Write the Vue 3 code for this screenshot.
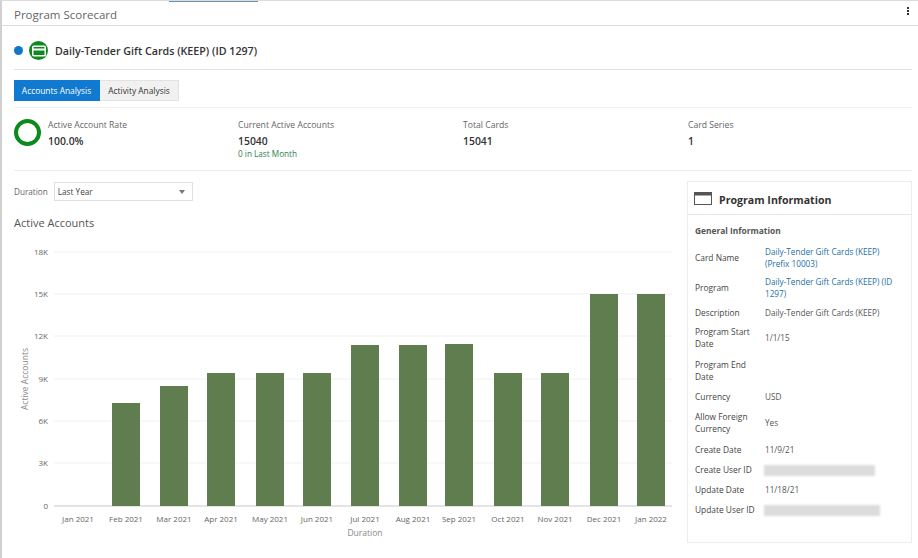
<template>
  <div class="page">
    <div class="top-tab"></div>
    <header class="head">
      <span class="head-title">Program Scorecard</span>
      <span class="kebab"><i></i><i></i><i></i></span>
    </header>

    <div class="content">
      <div class="program-row">
        <span class="status-dot"></span>
        <span class="card-badge">
          <svg width="14" height="12" viewBox="0 0 14 12">
            <rect x="0.75" y="1.25" width="12.5" height="9.5" rx="1" fill="none" stroke="#fff" stroke-width="1.5" />
            <rect x="1" y="3.5" width="12" height="2" fill="#fff" />
          </svg>
        </span>
        <span class="program-name">Daily-Tender Gift Cards (KEEP) (ID 1297)</span>
      </div>

      <div class="tabs-row">
        <button class="tab active">Accounts Analysis</button>
        <button class="tab">Activity Analysis</button>
      </div>

      <div class="metrics">
        <div class="metric first">
          <span class="ring"></span>
          <div>
            <div class="metric-label">Active Account Rate</div>
            <div class="metric-value">100.0%</div>
          </div>
        </div>
        <div class="metric">
          <div>
            <div class="metric-label">Current Active Accounts</div>
            <div class="metric-value">15040</div>
            <div class="metric-note">0 in Last Month</div>
          </div>
        </div>
        <div class="metric">
          <div>
            <div class="metric-label">Total Cards</div>
            <div class="metric-value">15041</div>
          </div>
        </div>
        <div class="metric">
          <div>
            <div class="metric-label">Card Series</div>
            <div class="metric-value">1</div>
          </div>
        </div>
      </div>

      <div class="main">
        <section class="chart-col">
          <div class="duration">
            <label>Duration</label>
            <div class="select">
              <span>Last Year</span>
              <span class="caret"></span>
            </div>
          </div>
          <h2 class="chart-title">Active Accounts</h2>
          <svg class="chart" width="672" height="320" viewBox="0 0 672 320">
            <g v-for="t in ticks" :key="t.label">
              <line x1="54" x2="672" :y1="t.y" :y2="t.y" :stroke="t.label === '0' ? '#c9c9c9' : '#f0f0f0'" />
              <text class="axis-text" x="48" :y="t.y + 3" text-anchor="end">{{ t.label }}</text>
            </g>
            <rect
              v-for="b in bars"
              :key="b.label"
              :x="b.x"
              :y="baseY - b.h"
              width="28"
              :height="b.h"
              fill="#5f7d4f"
            />
            <text
              v-for="b in bars"
              :key="b.label + 't'"
              class="axis-text"
              :x="b.x + 14"
              :y="baseY + 16"
              text-anchor="middle"
            >{{ b.label }}</text>
            <text class="axis-title" x="365" y="315" text-anchor="middle">Duration</text>
            <text class="axis-title" transform="translate(28 158) rotate(-90)" text-anchor="middle">Active Accounts</text>
          </svg>
        </section>

        <aside class="info-panel">
          <div class="info-head">
            <svg class="info-icon" width="18" height="13" viewBox="0 0 18 13">
              <rect x="0.5" y="0.5" width="17" height="12" fill="none" stroke="#555" />
              <rect x="1" y="1" width="16" height="2.5" fill="#555" />
            </svg>
            <h3>Program Information</h3>
          </div>
          <div class="info-body">
            <h4>General Information</h4>
            <div class="info-row" v-for="row in infoRows" :key="row.label" :class="row.cls">
              <div class="info-label">{{ row.label }}</div>
              <div class="info-value" :class="{ link: row.link }">
                <span v-if="row.blur" class="blurred" :style="{ width: row.blur + 'px' }"></span>
                <template v-else>{{ row.value }}</template>
              </div>
            </div>
          </div>
        </aside>
      </div>
    </div>
  </div>
</template>

<script setup>
const baseY = 285

const ticks = [
  { label: '18K', y: 31 },
  { label: '15K', y: 73 },
  { label: '12K', y: 115 },
  { label: '9K', y: 158 },
  { label: '6K', y: 200 },
  { label: '3K', y: 242 },
  { label: '0', y: 285 },
]

const bars = [
  { label: 'Jan 2021', x: 64, h: 0 },
  { label: 'Feb 2021', x: 112, h: 103 },
  { label: 'Mar 2021', x: 160, h: 120 },
  { label: 'Apr 2021', x: 207, h: 133 },
  { label: 'May 2021', x: 256, h: 133 },
  { label: 'Jun 2021', x: 303, h: 133 },
  { label: 'Jul 2021', x: 351, h: 161 },
  { label: 'Aug 2021', x: 399, h: 161 },
  { label: 'Sep 2021', x: 445, h: 162 },
  { label: 'Oct 2021', x: 494, h: 133 },
  { label: 'Nov 2021', x: 541, h: 133 },
  { label: 'Dec 2021', x: 590, h: 212 },
  { label: 'Jan 2022', x: 637, h: 212 },
]

const infoRows = [
  { label: 'Card Name', value: 'Daily-Tender Gift Cards (KEEP) (Prefix 10003)', link: true },
  { label: 'Program', value: 'Daily-Tender Gift Cards (KEEP) (ID 1297)', link: true },
  { label: 'Description', value: 'Daily-Tender Gift Cards (KEEP)' },
  { label: 'Program Start Date', value: '1/1/15' },
  { label: 'Program End Date', value: '', cls: 'gap-3' },
  { label: 'Currency', value: 'USD', cls: 'gap-1' },
  { label: 'Allow Foreign Currency', value: 'Yes', cls: 'gap-1' },
  { label: 'Create Date', value: '11/9/21', cls: 'gap-2' },
  { label: 'Create User ID', blur: 111 },
  { label: 'Update Date', value: '11/18/21' },
  { label: 'Update User ID', blur: 116 },
]
</script>

<style>
html,
body {
  margin: 0;
  background: #fff;
}
</style>

<style scoped>
.page {
  width: 918px;
  height: 558px;
  box-sizing: border-box;
  border-left: 2px solid #d0d0d0;
  border-top: 1px solid #dcdcdc;
  position: relative;
  overflow: hidden;
  font-family: "Open Sans", "Liberation Sans", sans-serif;
  color: #333;
}

.top-tab {
  position: absolute;
  top: -1px;
  left: 167px;
  width: 89px;
  height: 2px;
  background: #6d8fb0;
}

.head {
  height: 24px;
  box-sizing: content-box;
  display: flex;
  align-items: center;
  justify-content: space-between;
  padding: 0 9px 0 12px;
  border-bottom: 1px solid #dcdcdc;
}

.head-title {
  font-size: 11.5px;
  color: #666;
  margin-top: 2px;
}

.kebab {
  display: flex;
  flex-direction: column;
  gap: 1px;
  margin-top: -4px;
}

.kebab i {
  width: 2px;
  height: 2px;
  background: #333;
}

.content {
  padding: 0 6px 0 12px;
}

.program-row {
  height: 44px;
  box-sizing: border-box;
  padding-top: 6px;
  display: flex;
  align-items: center;
  border-bottom: 1px solid #dfdfdf;
}

.status-dot {
  width: 9px;
  height: 9px;
  border-radius: 50%;
  background: #0f78c9;
  margin-right: 6px;
}

.card-badge {
  width: 19px;
  height: 19px;
  border-radius: 50%;
  background: #0c8a1e;
  display: flex;
  align-items: center;
  justify-content: center;
  margin-right: 7px;
}

.program-name {
  font-size: 10.7px;
  font-weight: 600;
  color: #333;
}

.tabs-row {
  height: 38px;
  padding-top: 10px;
  box-sizing: border-box;
  display: flex;
  border-bottom: 1px solid #f0f0f0;
}

.tab {
  height: 21px;
  width: 79px;
  padding: 0;
  font: 8.4px "Open Sans", "Liberation Sans", sans-serif;
  border: 1px solid #e2e2e2;
  border-left: 0;
  background: #f1f1f1;
  color: #333;
}

.tab.active {
  width: 86px;
  background: #0f7ad0;
  border-color: #0f7ad0;
  color: #fff;
}

.metrics {
  height: 62px;
  display: grid;
  grid-template-columns: 224px 225px 225px 225px;
  border-bottom: 1px solid #ececec;
}

.metric {
  display: flex;
  padding-top: 11px;
}

.metric.first {
  gap: 7px;
}

.ring {
  width: 27px;
  height: 27px;
  box-sizing: border-box;
  border: 4.5px solid #0c8a1e;
  border-radius: 50%;
}

.metric-label {
  font-size: 8.65px;
  line-height: 13px;
  color: #666;
}

.metric-value {
  font-size: 10.4px;
  line-height: 18px;
  font-weight: 600;
  color: #333;
}

.metric-note {
  font-size: 8.2px;
  line-height: 13px;
  margin-top: -3px;
  color: #2e7d4f;
}

.main {
  display: flex;
  justify-content: space-between;
  padding-top: 10px;
}

.chart-col {
  width: 660px;
  margin-left: -2px;
}

.duration {
  display: flex;
  align-items: center;
  gap: 6px;
  padding-left: 2px;
  height: 20px;
}

.duration label {
  font-size: 8.2px;
  color: #666;
}

.select {
  width: 139px;
  height: 19px;
  margin-top: 1px;
  box-sizing: border-box;
  border: 1px solid #e0e0e0;
  display: flex;
  align-items: center;
  justify-content: space-between;
  padding: 0 5px 0 3px;
  font-size: 8.2px;
  color: #444;
}

.caret {
  width: 0;
  height: 0;
  margin-right: 2px;
  border-left: 3.5px solid transparent;
  border-right: 3.5px solid transparent;
  border-top: 4px solid #777;
}

.chart-title {
  margin: 14px 0 0 2px;
  font-size: 11px;
  line-height: 16px;
  font-weight: 400;
  color: #555;
}

.chart {
  display: block;
  margin: -10px 0 0 -12px;
}

.axis-text {
  font-size: 8px;
  fill: #666;
}

.axis-title {
  font-size: 8.5px;
  fill: #888;
}

.info-panel {
  width: 225px;
  height: 362px;
  box-sizing: border-box;
  border: 1px solid #ececec;
  flex: none;
}

.info-head {
  height: 33px;
  box-sizing: border-box;
  padding: 4px 0 0 6px;
  display: flex;
  align-items: center;
  gap: 7px;
  border-bottom: 1px solid #e6e6e6;
}

.info-icon {
  margin-top: -4px;
}

.info-head h3 {
  margin: 0;
  font-size: 10.6px;
  font-weight: 700;
  color: #333;
}

.info-body {
  padding: 9px 7px 0;
}

.info-body h4 {
  margin: 0 0 6px;
  font-size: 8.4px;
  line-height: 13px;
  font-weight: 700;
  color: #555;
}

.info-row {
  display: grid;
  grid-template-columns: 70px 1fr;
  align-items: center;
  padding: 3px 0;
  font-size: 8.2px;
  line-height: 12px;
  min-height: 14px;
}

.info-row.gap-1 {
  margin-top: 1px;
}

.info-row.gap-2 {
  margin-top: 2px;
}

.info-row.gap-3 {
  margin-top: 3px;
}

.info-label {
  font-size: 8.4px;
  color: #444;
  padding-right: 4px;
}

.info-value {
  color: #555;
}

.info-value.link {
  color: #1d6fa5;
}

.blurred {
  display: block;
  height: 11px;
  margin-left: -1px;
  background: #dcdcdc;
  filter: blur(1px);
}
</style>
